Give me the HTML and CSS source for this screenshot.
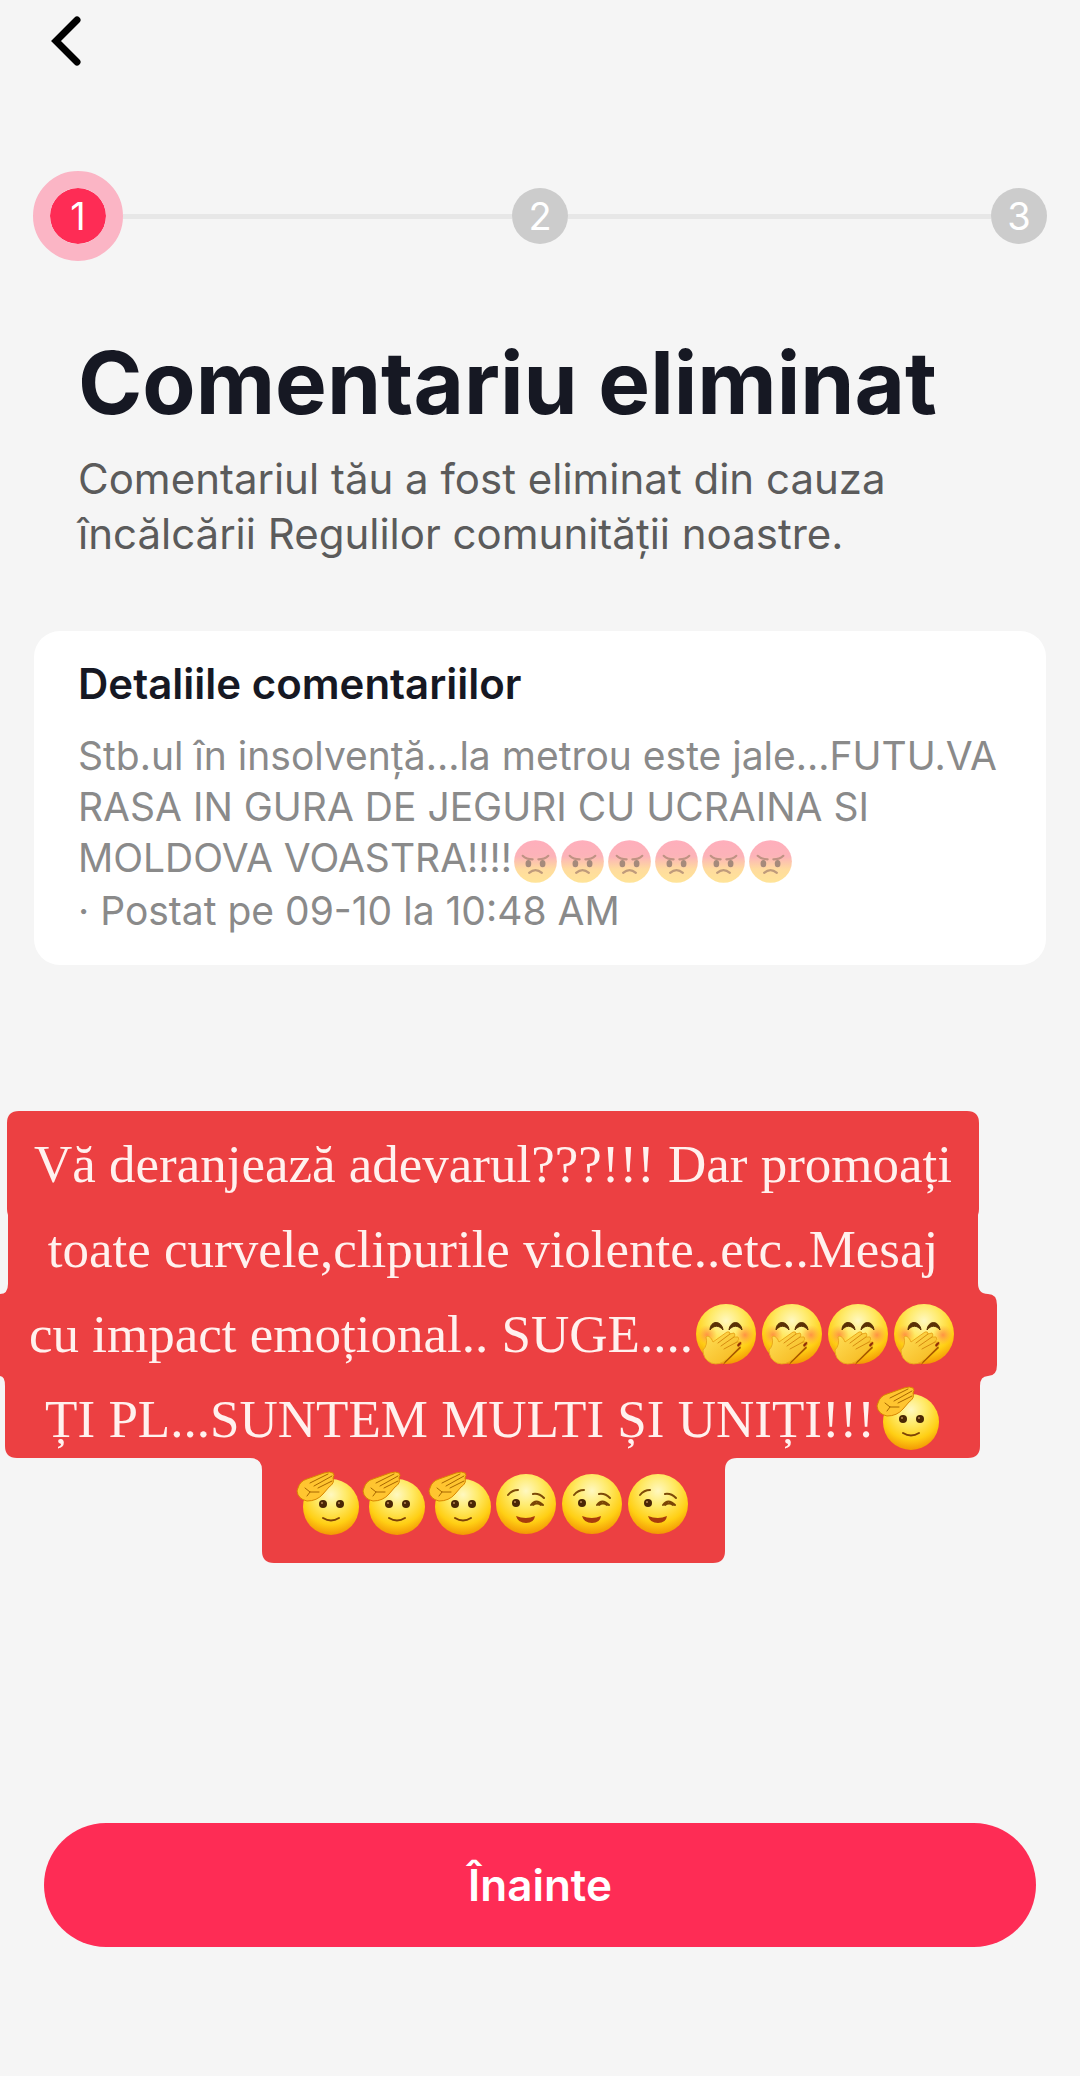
FILE: index.html
```
<!DOCTYPE html>
<html lang="ro">
<head>
<meta charset="utf-8">
<meta name="viewport" content="width=device-width, initial-scale=1">
<title>Comentariu eliminat</title>
<link rel="stylesheet" href="styles.css">
</head>
<body>
<svg class="defs" aria-hidden="true">
  <defs>
    <radialGradient id="gold" cx="50%" cy="28%" r="76%">
      <stop offset="0" stop-color="#fff8c0"/>
      <stop offset=".35" stop-color="#ffea68"/>
      <stop offset=".7" stop-color="#ffcf14"/>
      <stop offset="1" stop-color="#f08c00"/>
    </radialGradient>
    <linearGradient id="rage" x1="0" y1="0" x2="0" y2="1">
      <stop offset="0" stop-color="#ff6d86"/>
      <stop offset=".38" stop-color="#fb7780"/>
      <stop offset=".68" stop-color="#ffbf50"/>
      <stop offset="1" stop-color="#ffcf45"/>
    </linearGradient>
    <linearGradient id="hand" x1="0" y1="0" x2="1" y2="1">
      <stop offset="0" stop-color="#ffe05a"/>
      <stop offset="1" stop-color="#f5b418"/>
    </linearGradient>
    <radialGradient id="cheek">
      <stop offset="0" stop-color="#ff7a45" stop-opacity=".75"/>
      <stop offset="1" stop-color="#ff9a3c" stop-opacity="0"/>
    </radialGradient>
    <symbol id="angry" viewBox="0 0 66 66">
      <circle cx="33" cy="33" r="30" fill="url(#rage)"/>
      <ellipse cx="23" cy="36" rx="4" ry="5" fill="#5c2b10"/>
      <ellipse cx="43" cy="36" rx="4" ry="5" fill="#5c2b10"/>
      <path d="M15 25Q20 30 29 30M51 25Q46 30 37 30" fill="none" stroke="#8c3a20" stroke-width="3" stroke-linecap="round"/>
      <path d="M24 49Q33 41 42 49" fill="none" stroke="#8c4a10" stroke-width="3" stroke-linecap="round"/>
    </symbol>
    <symbol id="giggle" viewBox="0 0 66 66">
      <circle cx="33" cy="33" r="30" fill="url(#gold)"/>
      <circle cx="14" cy="34" r="10" fill="url(#cheek)"/>
      <circle cx="52" cy="34" r="10" fill="url(#cheek)"/>
      <path d="M17 29C17 19 29 19 30 29C26 24 21 24 17 29ZM36 29C37 19 48 19 49 29C45 24 40 24 36 29Z" fill="#5a3005" stroke="#5a3005" stroke-linejoin="round"/>
      <path d="M30 64L48 47L46 43L34 56Z" fill="#a85a00"/>
      <path d="M13 36C15 34 18 36 20 41L34 31Q37 30 37 33L41 32Q43 34 41 36L45 36Q47 38 44 41L48 41Q50 43 46 46L34 58Q27 65 18 62Q10 58 10 49Q15 44 13 36Z" fill="url(#hand)" stroke="#eba81c" stroke-width="1"/>
      <path d="M25 42L37 33M28 45L41 36M31 48L44 41" fill="none" stroke="#d78b10" stroke-width="1" stroke-linecap="round"/>
      <path d="M44 44Q46 41 48 41Q49 43 45 46Z" fill="#8f2d08"/>
    </symbol>
    <symbol id="salute" viewBox="0 0 66 66">
      <circle cx="36" cy="36" r="28" fill="url(#gold)"/>
      <ellipse cx="28" cy="33" rx="4" ry="4" fill="#4a2605"/>
      <ellipse cx="45" cy="33" rx="4" ry="4" fill="#4a2605"/>
      <circle cx="27" cy="32" r="1" fill="#b98650"/>
      <circle cx="44" cy="32" r="1" fill="#b98650"/>
      <path d="M28 47Q36 52 44 47" fill="none" stroke="#7d4306" stroke-width="2" stroke-linecap="round"/>
      <path d="M3 17Q5 10 12 8L29 2Q35 0 38 2Q40 4 38 7Q40 12 34 16L28 23Q22 30 12 30Q3 28 2 20Z" fill="#ffc530" stroke="#d98500" stroke-width="1"/>
      <path d="M15 12L33 3M19 15L37 5M23 17L37 10M10 17L15 21L24 21M15 21L12 25" fill="none" stroke="#a86600" stroke-width="1" stroke-linecap="round"/>
    </symbol>
    <symbol id="wink" viewBox="0 0 66 66">
      <circle cx="33" cy="33" r="30" fill="url(#gold)"/>
      <path d="M15 24Q19 19 25 19M40 23Q46 22 51 27" fill="none" stroke="#7d4a08" stroke-width="2" stroke-linecap="round"/>
      <ellipse cx="23" cy="32" rx="4" ry="4" fill="#4a2605"/>
      <circle cx="22" cy="31" r="1" fill="#b98650"/>
      <path d="M38 34Q43 27 50 34M40 34Q44 31 48 34" fill="none" stroke="#7a4505" stroke-width="2" stroke-linecap="round"/>
      <path d="M23 45Q33 49 42 45Q41 52 33 52Q25 52 23 45Z" fill="#a83c0c"/>
    </symbol>
  </defs>
</svg>

<main class="page">
  <header class="topbar">
    <button class="back" type="button" aria-label="Înapoi">
      <svg width="32" height="50" viewBox="0 0 32 50" aria-hidden="true"><path d="M27 4L6 25L27 46" fill="none" stroke="#000" stroke-width="7" stroke-linecap="round" stroke-linejoin="miter"/></svg>
    </button>
  </header>

  <ol class="steps">
    <li class="stage stage-first" aria-current="step"><span class="dot dot-current">1</span></li>
    <li class="stage"><span class="dot">2</span></li>
    <li class="stage stage-last"><span class="dot">3</span></li>
  </ol>

  <section class="intro">
    <h1>Comentariu eliminat</h1>
    <p>Comentariul tău a fost eliminat din cauza<br>încălcării Regulilor comunității noastre.</p>
  </section>

  <section class="card">
    <h2>Detaliile comentariilor</h2>
    <p>Stb.ul în insolvență...la metrou este jale...FUTU.VA<br>RASA IN GURA DE JEGURI CU UCRAINA SI<br>MOLDOVA VOASTRA!!!!<span class="faces" role="img" aria-label="fețe furioase"><svg><use href="#angry"/></svg><svg><use href="#angry"/></svg><svg><use href="#angry"/></svg><svg><use href="#angry"/></svg><svg><use href="#angry"/></svg><svg><use href="#angry"/></svg></span><br>· Postat pe 09-10 la 10:48 AM</p>
  </section>

  <section class="caption">
    <svg class="caption-shape" width="1000" height="452" viewBox="0 0 1000 452" aria-hidden="true"><path fill="#ec4042" d="M19 0H967Q979 0 979 12V98Q979 101 978 104V172Q978 183 988 183Q997 183 997 194V254Q997 265 988 265Q980 265 980 275V335Q980 347 968 347H737Q725 347 725 359V440Q725 452 713 452H274Q262 452 262 440V359Q262 347 250 347H17Q5 347 5 335V275Q5 265 0 265V183Q8 183 8 173V104Q7 101 7 98V12Q7 0 19 0Z"/></svg>
    <p class="line">Vă deranjează adevarul???!!! Dar promoați</p>
    <p class="line">toate curvele,clipurile violente..etc..Mesaj</p>
    <p class="line">cu impact emoțional.. SUGE....<svg><use href="#giggle"/></svg><svg><use href="#giggle"/></svg><svg><use href="#giggle"/></svg><svg><use href="#giggle"/></svg></p>
    <p class="line">ȚI PL...SUNTEM MULTI ȘI UNIȚI!!!<svg><use href="#salute"/></svg></p>
    <p class="line"><svg><use href="#salute"/></svg><svg><use href="#salute"/></svg><svg><use href="#salute"/></svg><svg><use href="#wink"/></svg><svg><use href="#wink"/></svg><svg><use href="#wink"/></svg></p>
  </section>

  <footer class="actions">
    <button class="next" type="button">Înainte</button>
  </footer>
</main>
</body>
</html>
```
FILE: styles.css
```
* {
  box-sizing: border-box;
}

body {
  margin: 0;
  background: #f5f5f5;
  color: #161823;
  font-family: Inter, "Noto Sans", sans-serif;
}

h1, h2, p, ol {
  margin: 0;
  padding: 0;
}

button {
  border: 0;
  padding: 0;
  font: inherit;
  cursor: pointer;
}

.defs {
  position: absolute;
  width: 0;
  height: 0;
}

.page {
  display: flex;
  flex-direction: column;
  min-height: 100vh;
  overflow-x: hidden;
  border-bottom: 4px solid #fdfdfd;
}

.topbar {
  padding: 16px 50px 0;
}

.back {
  display: block;
  height: 50px;
  background: none;
}

.back svg {
  display: block;
}

.steps {
  display: flex;
  margin-top: 105px;
  padding: 0 33px;
  list-style: none;
}

/* Each stage draws its own part of the rail, so the middle dot stays centred. */
.stage {
  display: flex;
  align-items: center;
}

.stage-first,
.stage-last {
  flex: 1;
}

.stage-first::after,
.stage-last::before {
  content: "";
  flex: 1;
  height: 5px;
  background: #e7e7e7;
}

.dot {
  width: 56px;
  height: 56px;
  border-radius: 50%;
  background: #ccc;
  color: #fff;
  font-size: 38px;
  line-height: 56px;
  text-align: center;
}

.dot-current {
  box-sizing: content-box;
  border: 17px solid #fbb5c5;
  background: #fe2c55;
  background-clip: padding-box;
}

.intro {
  margin-top: 72px;
  padding: 0 78px;
}

h1 {
  font-size: 87px;
  line-height: 100px;
  font-weight: 700;
}

.intro p {
  margin-top: 18px;
  color: #5b5b5b;
  font-size: 42px;
  line-height: 55px;
}

.card {
  margin: 70px 34px 0;
  padding: 29px 44px 29px;
  border-radius: 26px;
  background: #fff;
}

h2 {
  font-size: 42px;
  line-height: 48px;
  font-weight: 600;
}

.card p {
  margin-top: 22px;
  color: #8a8a8a;
  font-size: 39px;
  line-height: 51px;
  white-space: nowrap;
}

.faces {
  display: inline-flex;
  height: 47px;
  vertical-align: middle;
  opacity: .55;
}

.faces svg {
  width: 47px;
  height: 47px;
}

.caption {
  position: relative;
  margin-top: 146px;
  padding: 11px 94px 16px 0;
  color: #fff1ee;
  font-family: "Liberation Serif", serif;
  font-size: 53px;
}

.caption-shape {
  position: absolute;
  top: 0;
  left: 0;
}

.line {
  position: relative;
  display: flex;
  justify-content: center;
  align-items: center;
  height: 85px;
  line-height: 85px;
  white-space: nowrap;
}

.line svg {
  flex: none;
  width: 66px;
  height: 66px;
}

.actions {
  margin-top: auto;
  padding: 40px 44px 129px;
}

.next {
  display: block;
  width: 100%;
  height: 124px;
  border-radius: 62px;
  background: #fe2c55;
  color: #fff;
  font-size: 44px;
  font-weight: 600;
}
```
